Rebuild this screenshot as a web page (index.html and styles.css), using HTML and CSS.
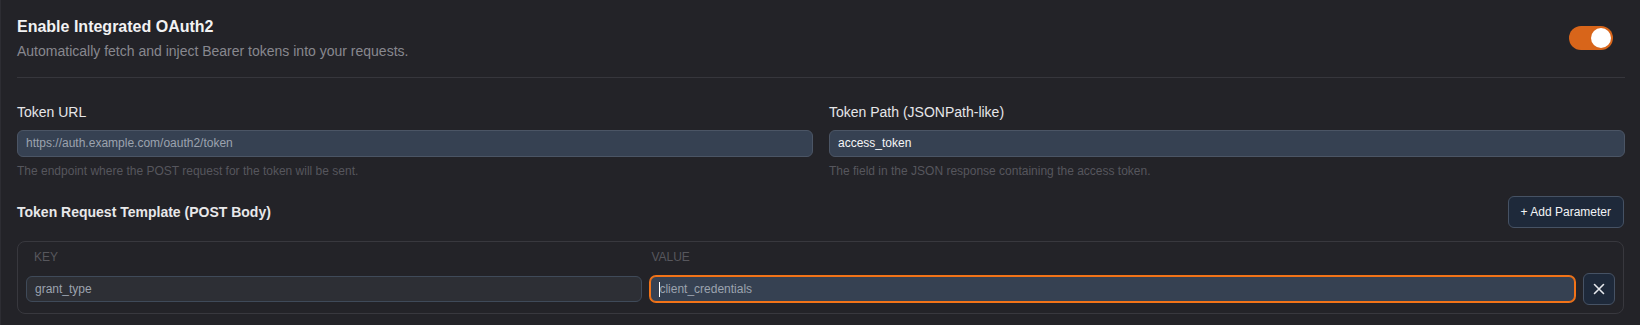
FILE: index.html
```html
<!DOCTYPE html>
<html lang="en">
<head>
<meta charset="utf-8">
<title>OAuth2 Settings</title>
<link rel="stylesheet" href="styles.css">
</head>
<body>
<div class="panel">
  <div class="header">
    <div class="header-text">
      <div class="title">Enable Integrated OAuth2</div>
      <div class="subtitle">Automatically fetch and inject Bearer tokens into your requests.</div>
    </div>
    <div class="toggle"><span class="knob"></span></div>
  </div>
  <div class="divider"></div>

  <div class="fields">
    <div class="field">
      <div class="label">Token URL</div>
      <div class="input placeholder">https://auth.example.com/oauth2/token</div>
      <div class="help">The endpoint where the POST request for the token will be sent.</div>
    </div>
    <div class="field">
      <div class="label">Token Path (JSONPath-like)</div>
      <div class="input value">access_token</div>
      <div class="help">The field in the JSON response containing the access token.</div>
    </div>
  </div>

  <div class="template-head">
    <div class="section-title">Token Request Template (POST Body)</div>
    <button class="btn-add">+ Add Parameter</button>
  </div>

  <div class="table">
    <div class="table-head">
      <div class="th th-key">KEY</div>
      <div class="th th-value">VALUE</div>
      <div></div>
    </div>
    <div class="table-row">
      <div class="cell-input key-input">grant_type</div>
      <div class="cell-input value-input"><span class="caret"></span>client_credentials</div>
      <button class="btn-remove" aria-label="Remove">
        <svg width="14" height="14" viewBox="0 0 14 14" fill="none" stroke="#e5e7eb" stroke-width="1.6" stroke-linecap="round"><path d="M2.5 2.5 L11.5 11.5 M11.5 2.5 L2.5 11.5"/></svg>
      </button>
    </div>
  </div>
</div>
</body>
</html>
```
FILE: styles.css
```css
html, body {
  margin: 0;
  padding: 0;
  background: #232328;
  font-family: "Liberation Sans", Arial, sans-serif;
}
.panel {
  width: 1640px;
  height: 325px;
  box-sizing: border-box;
  border-left: 1px solid #2d2d33;
  padding: 15px 15px 0 16px;
  overflow: hidden;
}
.header {
  display: flex;
  align-items: center;
  justify-content: space-between;
}
.title {
  font-size: 16px;
  line-height: 24px;
  font-weight: 700;
  color: #f2f2f3;
}
.subtitle {
  margin-top: 2px;
  font-size: 14px;
  line-height: 20px;
  color: #88888f;
}
.toggle {
  width: 44px;
  height: 24px;
  border-radius: 12px;
  background: #d8651a;
  margin-right: 12px;
  display: flex;
  align-items: center;
  justify-content: flex-end;
  padding: 0 2px;
  box-sizing: border-box;
}
.knob {
  width: 20px;
  height: 20px;
  border-radius: 50%;
  background: #ffffff;
}
.divider {
  height: 1px;
  background: #36363c;
  margin-top: 16px;
}
.fields {
  display: grid;
  grid-template-columns: 1fr 1fr;
  column-gap: 16px;
  margin-top: 24px;
}
.label {
  font-size: 14px;
  line-height: 20px;
  color: #e6e6e8;
}
.input {
  margin-top: 8px;
  height: 27px;
  box-sizing: border-box;
  border: 1px solid #4b5565;
  border-radius: 6px;
  background: #364152;
  padding: 0 8px;
  font-size: 12px;
  line-height: 25px;
}
.input.placeholder { color: #9ca3af; }
.input.value { color: #f5f5f6; }
.help {
  margin-top: 6px;
  font-size: 12px;
  line-height: 16px;
  color: #56565d;
}
.template-head {
  display: flex;
  align-items: center;
  justify-content: space-between;
  margin-top: 17px;
  margin-right: 1px;
}
.section-title {
  font-size: 14px;
  line-height: 20px;
  font-weight: 700;
  color: #e8e8ea;
}
.btn-add {
  height: 32px;
  box-sizing: border-box;
  padding: 0 12px;
  border: 1px solid #465264;
  border-radius: 6px;
  background: #1e293a;
  color: #f3f4f6;
  font-family: "Liberation Sans", Arial, sans-serif;
  font-size: 12px;
  line-height: 30px;
}
.table {
  margin-top: 13px;
  margin-right: 1px;
  border: 1px solid #38383e;
  border-radius: 8px;
  padding: 7px 8px 8px 8px;
}
.table-head,
.table-row {
  display: grid;
  grid-template-columns: 2fr 3fr 32px;
  column-gap: 8px;
}
.th {
  font-size: 12px;
  line-height: 16px;
  color: #57575d;
  text-transform: uppercase;
}
.th-key { padding-left: 8px; }
.th-value { padding-left: 1px; }
.table-row {
  margin-top: 8px;
  align-items: center;
}
.cell-input {
  height: 26px;
  box-sizing: border-box;
  border-radius: 6px;
  padding: 0 8px;
  font-size: 12px;
  line-height: 24px;
  color: #9ca3af;
  position: relative;
}
.key-input {
  background: #2d2f35;
  border: 1px solid #3f4a59;
}
.value-input {
  background: #364152;
  border: 1px solid #f27318;
  box-shadow: 0 0 0 1px #f27318;
}
.caret {
  position: absolute;
  left: 8px;
  top: 5px;
  width: 1px;
  height: 15px;
  background: #ffffff;
}
.btn-remove {
  width: 32px;
  height: 32px;
  box-sizing: border-box;
  border: 1px solid #465264;
  border-radius: 6px;
  background: #1e293a;
  display: flex;
  align-items: center;
  justify-content: center;
  padding: 0;
}
```
